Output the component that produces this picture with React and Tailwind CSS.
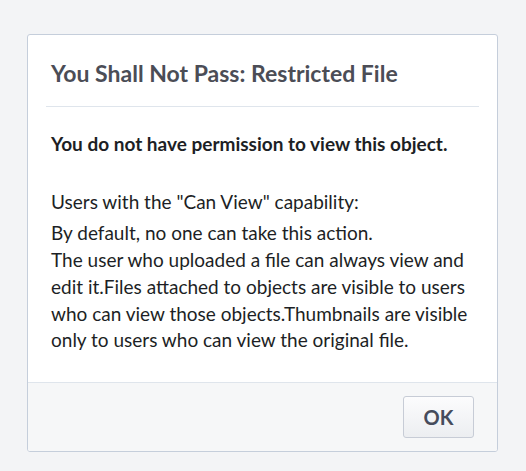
export default function App() {
  return (
    <div className="w-[526px] h-[471px] bg-[#f3f4f6] pt-[34px] pl-[27px]" style={{ fontFamily: 'Lato, "Noto Sans", sans-serif' }}>
      <div className="w-[471px] h-[418px] bg-white border border-[#c5cedb] rounded-[3px] flex flex-col overflow-hidden">
        <div className="mx-[18px] h-[72px] border-b border-[#dfe5ec] flex items-center pl-[5px] pt-[6px]">
          <h1 className="text-[23px] font-bold text-[#4b4d56]">You Shall Not Pass: Restricted File</h1>
        </div>
        <div className="flex-1 px-[23px] pt-[24px] text-[19px] leading-[26.7px] text-[#1d1f25]">
          <p className="font-bold">You do not have permission to view this object.</p>
          <p className="mt-[31px]">Users with the "Can View" capability:</p>
          <p className="mt-[5px]">By default, no one can take this action.<br />The user who uploaded a file can always view and edit it.Files attached to objects are visible to users who can view those objects.Thumbnails are visible only to users who can view the original file.</p>
        </div>
        <div className="h-[69px] bg-[#f6f7f8] border-t border-[#dfe5ec] flex items-center justify-end pr-[23px]">
          <button className="w-[71px] h-[42px] rounded-[3px] border border-[#c7ccd6] bg-gradient-to-b from-[#fcfcfd] to-[#eceef1] text-[20px] font-bold text-[#464c5c]">OK</button>
        </div>
      </div>
    </div>
  );
}
